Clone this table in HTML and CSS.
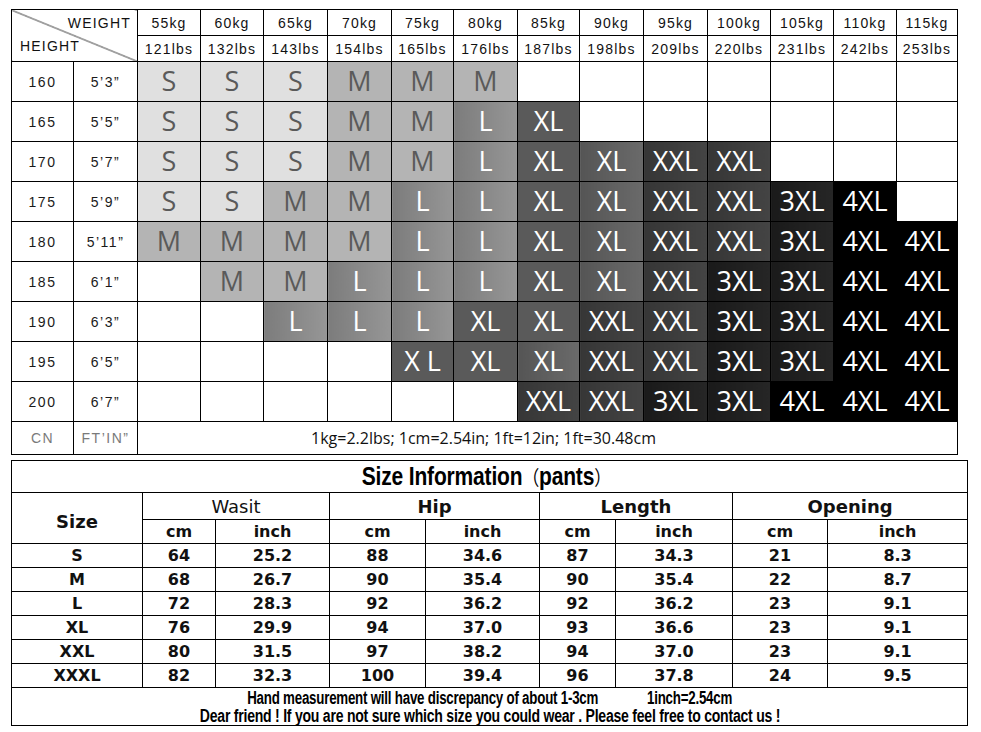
FILE: index.html
```html
<!DOCTYPE html>
<html>
<head>
<meta charset="utf-8">
<link rel="stylesheet" href="styles.css">
</head>
<body>
<div class="page">
<table class="chart">
  <colgroup>
    <col class="w62"><col class="w64">
    <col class="w63"><col class="w63"><col class="w64"><col class="w64"><col class="w62"><col class="w64"><col class="w62"><col class="w64"><col class="w64"><col class="w63"><col class="w63"><col class="w63"><col class="w61">
  </colgroup>
  <tr class="hrow">
    <td class="diag" colspan="2" rowspan="2">
      <div class="diag-in"><span class="dw">WEIGHT</span><span class="dh">HEIGHT</span></div>
    </td>
    <td>55kg</td><td>60kg</td><td>65kg</td><td>70kg</td><td>75kg</td><td>80kg</td><td>85kg</td><td>90kg</td><td>95kg</td><td>100kg</td><td>105kg</td><td>110kg</td><td>115kg</td>
  </tr>
  <tr class="hrow">
    <td>121lbs</td><td>132lbs</td><td>143lbs</td><td>154lbs</td><td>165lbs</td><td>176lbs</td><td>187lbs</td><td>198lbs</td><td>209lbs</td><td>220lbs</td><td>231lbs</td><td>242lbs</td><td>253lbs</td>
  </tr>
  <tr class="row">
    <td class="lab">160</td><td class="lab">5’3”</td>
    <td class="s">S</td><td class="s">S</td><td class="s">S</td><td class="m">M</td><td class="m">M</td><td class="m">M</td><td></td><td></td><td></td><td></td><td></td><td></td><td></td>
  </tr>
  <tr class="row">
    <td class="lab">165</td><td class="lab">5’5”</td>
    <td class="s">S</td><td class="s">S</td><td class="s">S</td><td class="m">M</td><td class="m">M</td><td class="l">L</td><td class="xl">XL</td><td></td><td></td><td></td><td></td><td></td><td></td>
  </tr>
  <tr class="row">
    <td class="lab">170</td><td class="lab">5’7”</td>
    <td class="s">S</td><td class="s">S</td><td class="s">S</td><td class="m">M</td><td class="m">M</td><td class="l">L</td><td class="xl">XL</td><td class="xl2">XL</td><td class="xxl">XXL</td><td class="xxl">XXL</td><td></td><td></td><td></td>
  </tr>
  <tr class="row">
    <td class="lab">175</td><td class="lab">5’9”</td>
    <td class="s">S</td><td class="s">S</td><td class="m">M</td><td class="m">M</td><td class="l">L</td><td class="l">L</td><td class="xl">XL</td><td class="xl2">XL</td><td class="xxl">XXL</td><td class="xxl">XXL</td><td class="x3">3XL</td><td class="x4">4XL</td><td></td>
  </tr>
  <tr class="row">
    <td class="lab">180</td><td class="lab">5’11”</td>
    <td class="m">M</td><td class="m">M</td><td class="m">M</td><td class="m">M</td><td class="l">L</td><td class="l">L</td><td class="xl">XL</td><td class="xl2">XL</td><td class="xxl">XXL</td><td class="xxl">XXL</td><td class="x3">3XL</td><td class="x4">4XL</td><td class="x4">4XL</td>
  </tr>
  <tr class="row">
    <td class="lab">185</td><td class="lab">6’1”</td>
    <td></td><td class="m">M</td><td class="m">M</td><td class="l">L</td><td class="l">L</td><td class="l">L</td><td class="xl">XL</td><td class="xl2">XL</td><td class="xxl">XXL</td><td class="x3">3XL</td><td class="x3">3XL</td><td class="x4">4XL</td><td class="x4">4XL</td>
  </tr>
  <tr class="row">
    <td class="lab">190</td><td class="lab">6’3”</td>
    <td></td><td></td><td class="l">L</td><td class="l">L</td><td class="l">L</td><td class="xl">XL</td><td class="xl">XL</td><td class="xxl">XXL</td><td class="xxl">XXL</td><td class="x3">3XL</td><td class="x3">3XL</td><td class="x4">4XL</td><td class="x4">4XL</td>
  </tr>
  <tr class="row">
    <td class="lab">195</td><td class="lab">6’5”</td>
    <td></td><td></td><td></td><td></td><td class="xl">X L</td><td class="xl">XL</td><td class="xl2">XL</td><td class="xxl">XXL</td><td class="xxl">XXL</td><td class="x3">3XL</td><td class="x3">3XL</td><td class="x4">4XL</td><td class="x4">4XL</td>
  </tr>
  <tr class="row">
    <td class="lab">200</td><td class="lab">6’7”</td>
    <td></td><td></td><td></td><td></td><td></td><td></td><td class="xxl">XXL</td><td class="xxl">XXL</td><td class="x3">3XL</td><td class="x3">3XL</td><td class="x4">4XL</td><td class="x4">4XL</td><td class="x4">4XL</td>
  </tr>
  <tr class="frow">
    <td class="lab gray">CN</td><td class="lab gray">FT’IN”</td>
    <td class="note" colspan="13">1kg=2.2lbs; 1cm=2.54in; 1ft=12in; 1ft=30.48cm</td>
  </tr>
</table>

<table class="info">
  <colgroup>
    <col class="b131"><col class="b73"><col class="b114"><col class="b96"><col class="b114"><col class="b76"><col class="b117"><col class="b95"><col class="b140">
  </colgroup>
  <tr class="trow"><td colspan="9" class="title"><span class="tt">Size Information<span class="paren">（</span>pants<span class="paren">）</span></span></td></tr>
  <tr class="g1">
    <td rowspan="2" class="sizeh">Size</td>
    <td colspan="2" class="grp reg">Wasit</td>
    <td colspan="2" class="grp">Hip</td>
    <td colspan="2" class="grp">Length</td>
    <td colspan="2" class="grp">Opening</td>
  </tr>
  <tr class="g2"><td>cm</td><td>inch</td><td>cm</td><td>inch</td><td>cm</td><td>inch</td><td>cm</td><td>inch</td></tr>
  <tr class="d"><td>S</td><td>64</td><td>25.2</td><td>88</td><td>34.6</td><td>87</td><td>34.3</td><td>21</td><td>8.3</td></tr>
  <tr class="d"><td>M</td><td>68</td><td>26.7</td><td>90</td><td>35.4</td><td>90</td><td>35.4</td><td>22</td><td>8.7</td></tr>
  <tr class="d"><td>L</td><td>72</td><td>28.3</td><td>92</td><td>36.2</td><td>92</td><td>36.2</td><td>23</td><td>9.1</td></tr>
  <tr class="d"><td>XL</td><td>76</td><td>29.9</td><td>94</td><td>37.0</td><td>93</td><td>36.6</td><td>23</td><td>9.1</td></tr>
  <tr class="d"><td>XXL</td><td>80</td><td>31.5</td><td>97</td><td>38.2</td><td>94</td><td>37.0</td><td>23</td><td>9.1</td></tr>
  <tr class="d"><td>XXXL</td><td>82</td><td>32.3</td><td>100</td><td>39.4</td><td>96</td><td>37.8</td><td>24</td><td>9.5</td></tr>
  <tr class="foot"><td colspan="9">
    <div class="fl"><span class="ft f1">Hand measurement will have discrepancy of about 1-3cm<span class="gap"></span>1inch=2.54cm</span></div>
    <div class="fl"><span class="ft f2">Dear friend ! If you are not sure which size you could wear . Please feel free to contact us !</span></div>
  </td></tr>
</table>
</div>
</body>
</html>
```

FILE: styles.css
```css
html, body { margin: 0; padding: 0; background: #fff; }
.page { padding: 9px 0 0 11px; }

table { border-collapse: collapse; table-layout: fixed; }
td { border: 1px solid #000; padding: 0; text-align: center; vertical-align: middle; overflow: hidden; white-space: nowrap; }

.chart { width: 947px; font-family: "Liberation Sans", Arial, sans-serif; color: #111; }
.w61 { width: 61px; } .w62 { width: 62px; } .w63 { width: 63px; } .w64 { width: 64px; }

.hrow td { height: 25px; font-size: 14px; letter-spacing: 1.2px; }
.row td { height: 37px; font-family: "Open Sans", "Noto Sans", sans-serif; font-size: 27px; line-height: 1; padding-bottom: 2px; }
.row td.lab, .frow td.lab { font-family: "Liberation Sans", Arial, sans-serif; font-size: 14px; letter-spacing: 1.5px; color: #1a1a1a; padding: 0; height: 39px; }
.frow td, .frow td.lab { height: 32px; }
.frow td.gray { color: #7a7a7a; }
.note { font-family: "Open Sans", "Noto Sans", sans-serif; font-size: 16px; color: #111; padding-right: 128px !important; letter-spacing: 0; }

.diag {
  background: linear-gradient(to top right, transparent calc(50% - 0.8px), #222 50%, transparent calc(50% + 0.8px));
  font-size: 14px; letter-spacing: 0;
}
.diag-in { display: flex; flex-direction: column; height: 51px; padding: 5px 6px 0 8px; box-sizing: border-box; }
.dw { align-self: flex-end; line-height: 17px; }
.dh { align-self: flex-start; line-height: 17px; margin-top: 6px; }

.s { background: #e0e0e0; color: #5a5a5a; }
.m { background: #b4b4b4; color: #5a5a5a; }
.l { background: linear-gradient(90deg, #7c7c7c, #969696); color: #fff; }
.xl { background: #5a5a5a; color: #fff; }
.xl2 { background: linear-gradient(90deg, #555, #6a6a6a); color: #fff; }
.xxl { background: linear-gradient(90deg, #363636, #444); color: #fff; }
.x3 { background: linear-gradient(90deg, #1a1a1a, #262626); color: #fff; }
.x4 { background: #000; color: #fff; }

.info { width: 957px; margin-top: 5px; font-family: "DejaVu Sans", Verdana, sans-serif; font-weight: bold; color: #111; }
.b73 { width: 73px; } .b76 { width: 76px; } .b95 { width: 95px; } .b96 { width: 96px; }
.b114 { width: 114px; } .b117 { width: 117px; } .b131 { width: 131px; } .b140 { width: 140px; }

.trow td { height: 31px; }
.title { font-family: "Liberation Sans", Arial, sans-serif; font-weight: bold; font-size: 25px; color: #000; padding-left: 0; }
.tt { display: inline-block; transform: scaleX(0.84); letter-spacing: -0.2px; margin-right: 6px; }
.paren { font-family: "Noto Sans CJK SC", sans-serif; font-weight: normal; font-size: 20px; }
.g1 td { height: 26px; font-size: 18px; }
.g1 td.reg { font-weight: normal; }
.g1 td.sizeh { font-size: 18px; padding-top: 6px; }
.g2 td { height: 23px; font-size: 16px; }
.d td { height: 23px; font-size: 16px; line-height: 1; }
.foot td { height: 37px; font-family: "Liberation Sans", Arial, sans-serif; font-weight: bold; font-size: 18px; color: #000; }
.fl { line-height: 18px; }
.ft { display: inline-block; letter-spacing: -0.3px; }
.f1 { transform: scaleX(0.74); }
.f2 { transform: scaleX(0.78); }
.gap { display: inline-block; width: 66px; }
```
